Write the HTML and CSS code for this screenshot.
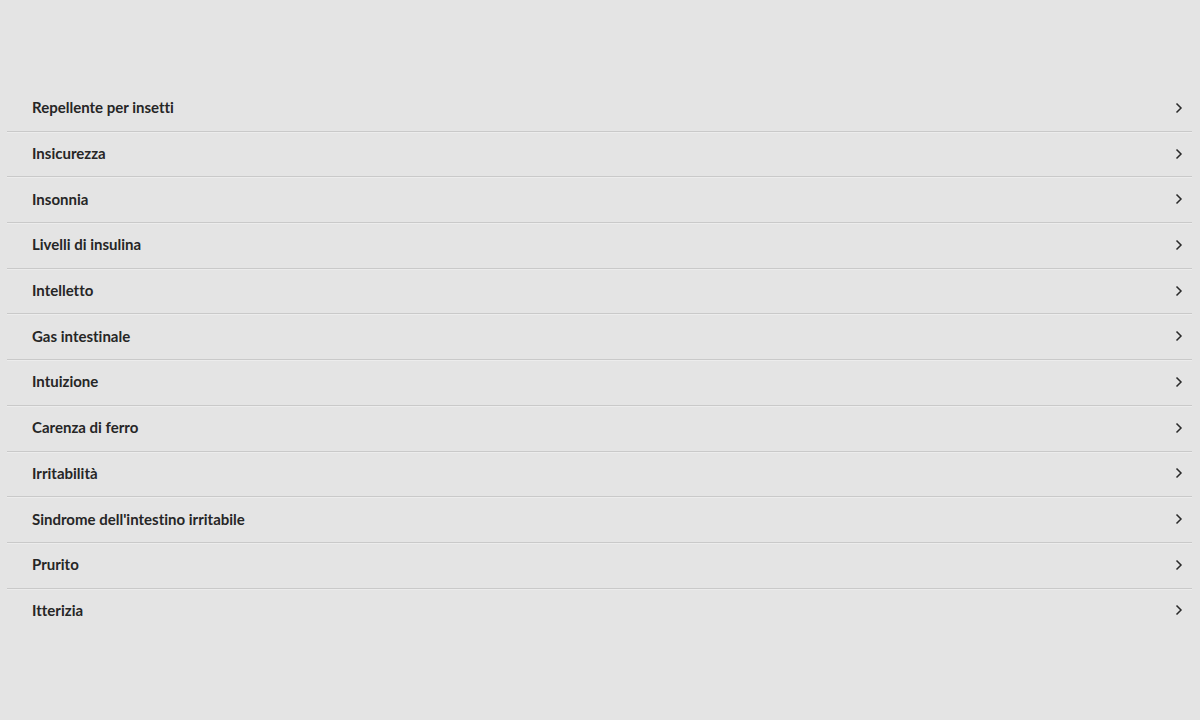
FILE: index.html
```html
<!DOCTYPE html>
<html lang="it">
<head>
<meta charset="utf-8">
<link rel="stylesheet" href="styles.css">
</head>
<body>
<ul class="list">
  <li class="row"><span class="label">Repellente per insetti</span><svg class="chev" viewBox="0 0 8 12"><path d="M1.5 1.5 L6 6 L1.5 10.5"/></svg></li>
  <li class="row"><span class="label">Insicurezza</span><svg class="chev" viewBox="0 0 8 12"><path d="M1.5 1.5 L6 6 L1.5 10.5"/></svg></li>
  <li class="row"><span class="label">Insonnia</span><svg class="chev" viewBox="0 0 8 12"><path d="M1.5 1.5 L6 6 L1.5 10.5"/></svg></li>
  <li class="row"><span class="label">Livelli di insulina</span><svg class="chev" viewBox="0 0 8 12"><path d="M1.5 1.5 L6 6 L1.5 10.5"/></svg></li>
  <li class="row"><span class="label">Intelletto</span><svg class="chev" viewBox="0 0 8 12"><path d="M1.5 1.5 L6 6 L1.5 10.5"/></svg></li>
  <li class="row"><span class="label">Gas intestinale</span><svg class="chev" viewBox="0 0 8 12"><path d="M1.5 1.5 L6 6 L1.5 10.5"/></svg></li>
  <li class="row"><span class="label">Intuizione</span><svg class="chev" viewBox="0 0 8 12"><path d="M1.5 1.5 L6 6 L1.5 10.5"/></svg></li>
  <li class="row"><span class="label">Carenza di ferro</span><svg class="chev" viewBox="0 0 8 12"><path d="M1.5 1.5 L6 6 L1.5 10.5"/></svg></li>
  <li class="row"><span class="label">Irritabilità</span><svg class="chev" viewBox="0 0 8 12"><path d="M1.5 1.5 L6 6 L1.5 10.5"/></svg></li>
  <li class="row"><span class="label">Sindrome dell'intestino irritabile</span><svg class="chev" viewBox="0 0 8 12"><path d="M1.5 1.5 L6 6 L1.5 10.5"/></svg></li>
  <li class="row"><span class="label">Prurito</span><svg class="chev" viewBox="0 0 8 12"><path d="M1.5 1.5 L6 6 L1.5 10.5"/></svg></li>
  <li class="row last"><span class="label">Itterizia</span><svg class="chev" viewBox="0 0 8 12"><path d="M1.5 1.5 L6 6 L1.5 10.5"/></svg></li>
</ul>
</body>
</html>
```
FILE: styles.css
```css
html, body {
  margin: 0;
  padding: 0;
  background: #e4e4e4;
}
body {
  font-family: Lato, "Liberation Sans", sans-serif;
  color: #262626;
  font-variant-ligatures: none;
}
.list {
  list-style: none;
  margin: 0 8px 0 7px;
  padding: 86px 0 0 0;
}
.row {
  display: flex;
  align-items: center;
  justify-content: space-between;
  height: 44.7px;
  padding: 0 10px 0 25px;
  border-bottom: 1px solid #c9c9c9;
  box-shadow: 0 1px 0 #ececec;
}
.row.last {
  border-bottom: none;
  box-shadow: none;
}
.label {
  font-size: 15px;
  font-weight: 700;
  margin-bottom: 2px;
}
.chev {
  width: 8px;
  height: 12px;
  margin-right: -1px;
  margin-bottom: 1px;
  fill: none;
  stroke: #2a2a2a;
  stroke-width: 1.5;
}
```
